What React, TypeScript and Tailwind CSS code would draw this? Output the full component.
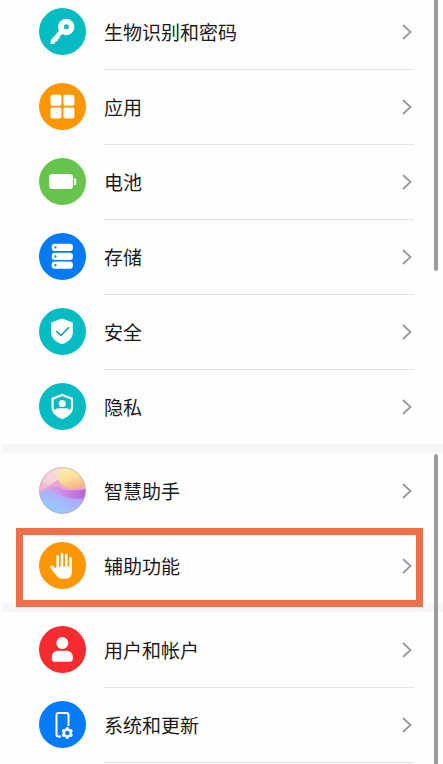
import type { ReactNode } from 'react';

interface SettingItem {
  label: string;
  icon: ReactNode;
  highlighted?: boolean;
}

function RoundIcon({ color, children }: { color: string; children: ReactNode }) {
  return (
    <svg className="size-[47px] shrink-0" viewBox="0 0 47 47" fill="none" aria-hidden="true">
      <circle cx="23.5" cy="23.5" r="23.5" fill={color} />
      {children}
    </svg>
  );
}

const KeyIcon = () => (
  <RoundIcon color="#06bcc3">
    <path d="M22 24 13.5 33.5" stroke="#fff" strokeWidth="4.6" />
    <path d="M11.8 32 11.5 36.2 15.8 35.8 16.2 33.2 18.4 33.4 18.8 31 21 30.6 19 28Z" fill="#fff" />
    <circle cx="27.2" cy="19" r="8.2" fill="#fff" />
    <circle cx="27.4" cy="18.8" r="2.5" fill="#06bcc3" />
  </RoundIcon>
);

const AppsIcon = () => (
  <RoundIcon color="#fb9604">
    <g fill="#fff">
      <rect x="11.5" y="11.7" width="11" height="11" rx="2" />
      <rect x="24.4" y="11.7" width="11" height="11" rx="2" />
      <rect x="11.5" y="24.6" width="11" height="11" rx="2" />
      <rect x="24.4" y="24.6" width="11" height="11" rx="2" />
    </g>
  </RoundIcon>
);

const BatteryIcon = () => (
  <RoundIcon color="#67c54e">
    <rect x="10.2" y="16" width="23.8" height="15" rx="3" fill="#fff" />
    <path d="M35 20.3h.8a1.5 1.5 0 0 1 1.5 1.5v3.6a1.5 1.5 0 0 1-1.5 1.5H35Z" fill="#fff" />
  </RoundIcon>
);

const StorageIcon = () => (
  <RoundIcon color="#067bf1">
    {[10.8, 19.8, 28.6].map((y) => (
      <g key={y}>
        <rect x="12.7" y={y} width="21.2" height="7.2" rx="3" fill="#fff" />
        <circle cx="16.5" cy={y + 3.6} r="1.1" fill="#067bf1" />
      </g>
    ))}
  </RoundIcon>
);

const SecurityIcon = () => (
  <RoundIcon color="#06bcc3">
    <path d="M23 10.6 33.8 14.6v9.9c0 5.6-4.6 9.6-10.8 11.8-6.2-2.2-10.800-6.2-10.800-11.800V14.6Z" fill="#fff" />
    <path d="m17.2 23 4.8 4.500 8-8.300" stroke="#1399a3" strokeWidth="1.600" />
  </RoundIcon>
);

const PrivacyIcon = () => (
  <RoundIcon color="#06bcc3">
    <path d="M23.300 12 33 15.700v8.800c0 4.900-4.200 8.300-9.700 10.500-5.500-2.200-9.700-5.600-9.700-10.500v-8.800Z" stroke="#fff" strokeWidth="2.200" />
    <circle cx="23.300" cy="20.500" r="3.500" fill="#fff" />
    <path d="M14.500 27.800c1.200-1.800 3.200-2.600 5.500-2.600h6.600c2.300 0 4.300.8 5.500 2.600-1 3.500-4.300 6.200-8.800 7.900-4.500-1.700-7.800-4.400-8.800-7.900Z" fill="#fff" />
  </RoundIcon>
);

const AssistantIcon = () => (
  <svg className="size-[47px] shrink-0" viewBox="0 0 47 47" fill="none" aria-hidden="true">
    <defs>
      <linearGradient id="sky" x1="0" y1="0.300" x2="0.900" y2="0">
        <stop offset="0" stopColor="#f0b5d4" />
        <stop offset="0.500" stopColor="#f7d3cb" />
        <stop offset="1" stopColor="#fbe3a2" />
      </linearGradient>
      <linearGradient id="sun" x1="0.300" y1="0" x2="0.700" y2="1">
        <stop offset="0" stopColor="#fbf1b4" />
        <stop offset="0.500" stopColor="#fbdd9a" />
        <stop offset="1" stopColor="#f6a884" />
      </linearGradient>
      <linearGradient id="wave" x1="0" y1="0" x2="1" y2="0">
        <stop offset="0" stopColor="#d9b2ee" />
        <stop offset="0.500" stopColor="#cf8be4" />
        <stop offset="1" stopColor="#b565dc" />
      </linearGradient>
      <linearGradient id="sea" x1="0.200" y1="1" x2="0.900" y2="0.200">
        <stop offset="0" stopColor="#86d5fd" />
        <stop offset="0.500" stopColor="#a3bcfc" />
        <stop offset="1" stopColor="#b99bf6" />
      </linearGradient>
      <clipPath id="ball">
        <circle cx="23.500" cy="23.500" r="23" />
      </clipPath>
    </defs>
    <g clipPath="url(#ball)">
      <rect width="47" height="47" fill="url(#sky)" />
      <circle cx="11" cy="7" r="11" fill="#fff" fillOpacity="0.250" />
      <path d="M0 24C8 22 12 16 19 13c10-1 16 7 28 8v12H0Z" fill="#eda6cf" />
      <ellipse cx="36" cy="10" rx="17" ry="12" fill="url(#sun)" />
      <path d="M0 25c7-6 13-7 20-4.500 9 4 16 3 27 1.500v12H0Z" fill="url(#wave)" />
      <path d="M0 26.500c8-3.500 13-3 19 0 8 5 16 6.500 28 4.500v17H0Z" fill="url(#sea)" />
    </g>
    <circle cx="23.500" cy="23.500" r="23" stroke="#b59a9e" strokeOpacity="0.600" />
  </svg>
);

const HandIcon = () => (
  <RoundIcon color="#fb9604">
    <g stroke="#fff" strokeWidth="2.600" strokeLinecap="round">
      <path d="M18.700 27V14.200M23 25V12M27.300 25V13M31.600 27V16.300" />
    </g>
    <path d="M17.400 24.500H32.900V30c0 4.300-2.500 6.700-6.500 6.700h-2.600c-2.700 0-4.600-.9-6-2.800l-6.300-8c-1.100-1.500.7-3.100 2.300-2.100l3.600 2.900Z" fill="#fff" />
  </RoundIcon>
);

const UserIcon = () => (
  <RoundIcon color="#f52b2f">
    <circle cx="23.300" cy="17" r="6" fill="#fff" />
    <path d="M12.800 33v-2.500c0-3.500 3-5.800 6.500-5.800h8c3.500 0 6.500 2.300 6.500 5.800V33c0 1.700-1 2.700-2.700 2.700H15.500c-1.700 0-2.700-1-2.700-2.700Z" fill="#fff" />
  </RoundIcon>
);

const SystemIcon = () => (
  <RoundIcon color="#067bf7">
    <path d="M22 35.500h-2.500a2 2 0 0 1-2-2V14a2 2 0 0 1 2-2h8a2 2 0 0 1 2 2v11" stroke="#fff" strokeWidth="2" />
    <circle cx="28.300" cy="32" r="3.500" stroke="#fff" strokeWidth="2.400" />
    {[0, 60, 120, 180, 240, 300].map((angle) => (
      <rect key={angle} x="26.800" y="26.200" width="3" height="2.500" rx="0.600" fill="#fff" transform={`rotate(${angle} 28.300 32)`} />
    ))}
  </RoundIcon>
);

const groups: SettingItem[][] = [
  [
    { label: '生物识别和密码', icon: <KeyIcon /> },
    { label: '应用', icon: <AppsIcon /> },
    { label: '电池', icon: <BatteryIcon /> },
    { label: '存储', icon: <StorageIcon /> },
    { label: '安全', icon: <SecurityIcon /> },
    { label: '隐私', icon: <PrivacyIcon /> },
  ],
  [
    { label: '智慧助手', icon: <AssistantIcon /> },
    { label: '辅助功能', icon: <HandIcon />, highlighted: true },
  ],
  [
    { label: '用户和帐户', icon: <UserIcon /> },
    { label: '系统和更新', icon: <SystemIcon /> },
  ],
];

function SettingRow({ item, divided }: { item: SettingItem; divided: boolean }) {
  return (
    <li className="relative">
      <button type="button" className="flex h-[75px] w-full items-center gap-[18px] pr-[29px] pl-[37px] text-left">
        {item.icon}
        <span className={`flex h-full flex-1 items-center justify-between border-t pb-px ${divided ? 'border-[#e4e4e4]' : 'border-transparent'}`}>
          <span className="pt-1 text-[19px] leading-7 text-[#1a1a1a]">{item.label}</span>
          <svg className="mr-0.5 h-4 w-2.5" viewBox="0 0 10 16" fill="none" aria-hidden="true">
            <path d="m1 1 7.500 7-7.500 7" stroke="#999" strokeWidth="1.800" />
          </svg>
        </span>
      </button>
      {item.highlighted && (
        <div className="pointer-events-none absolute top-0 right-5 -bottom-1 left-3.5 z-10 border-[7px] border-[#ed7047]" />
      )}
    </li>
  );
}

export default function App() {
  return (
    <main className="relative h-screen overflow-hidden bg-[#fefefe] font-['Liberation_Sans','Noto_Sans_CJK_SC',sans-serif]">
      {/* The list is scrolled, so the first row is partly cut off */}
      <div className="-mt-1.5 ml-0.5 flex flex-col gap-[9px] bg-[#f6f6f6]">
        {groups.map((group, i) => (
          <ul key={i} className="bg-[#fefefe]">
            {group.map((item, j) => (
              <SettingRow key={item.label} item={item} divided={j > 0 && !item.highlighted} />
            ))}
            {i === groups.length - 1 && <li className="mr-[29px] ml-[102px] h-2 border-t border-[#e4e4e4]" />}
          </ul>
        ))}
      </div>

      {/* Scrollbars */}
      <div className="absolute top-0 right-[5px] h-[271px] w-1 rounded-b-full bg-[#9c9c9c]" />
      <div className="absolute top-[454px] right-[5px] bottom-0 w-1 rounded-t-full bg-[#9c9c9c]" />
    </main>
  );
}
